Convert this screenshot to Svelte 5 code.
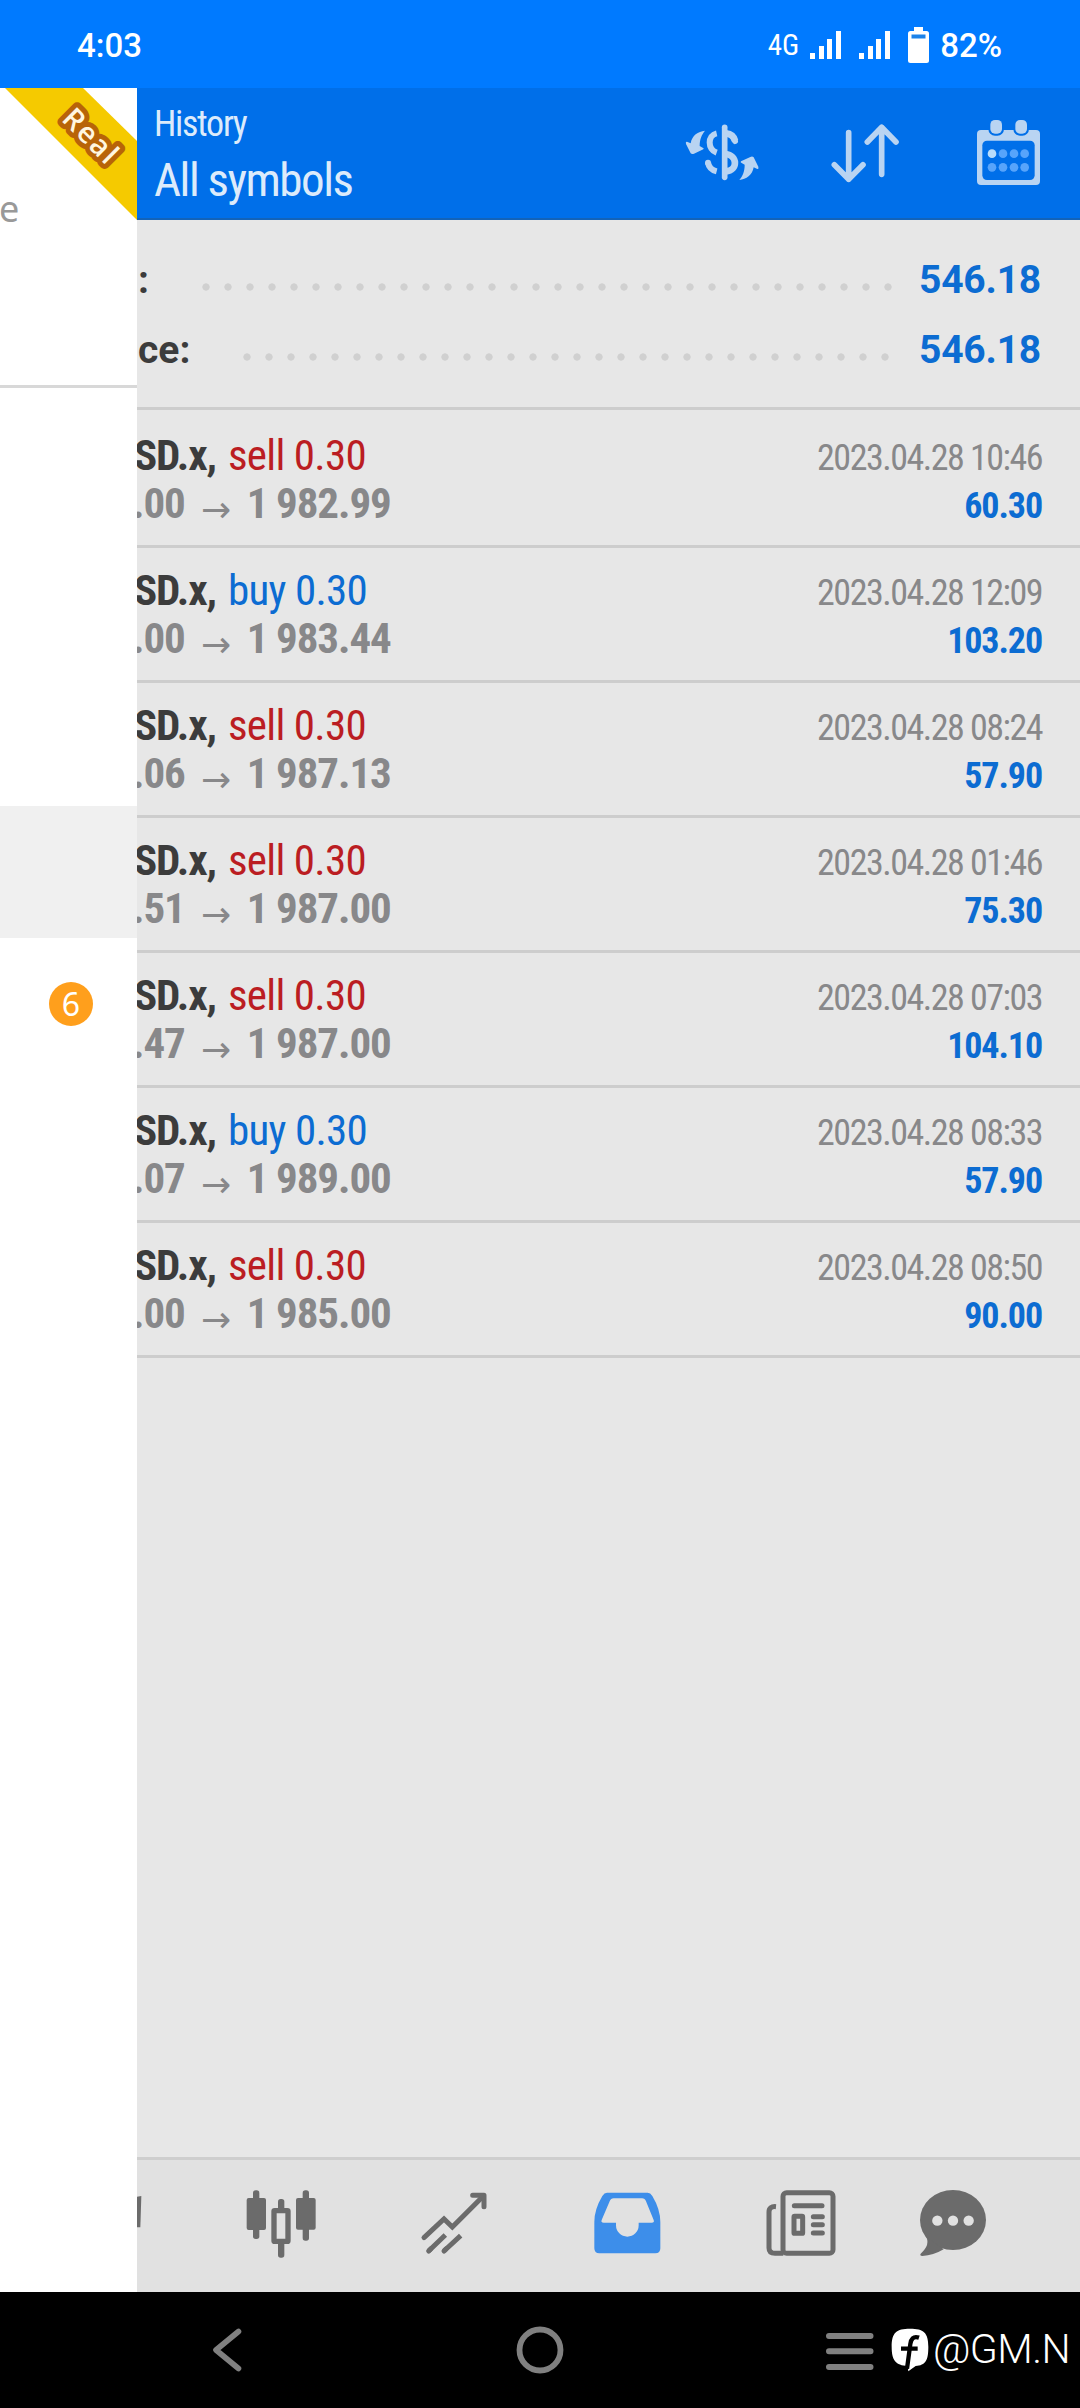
<script lang="ts">
	interface Deal {
		type: 'sell' | 'buy';
		open: string;
		close: string;
		time: string;
		profit: string;
	}

	const totals = [
		{ label: ':', value: '546.18', dots: 32 },
		{ label: 'ce:', value: '546.18', dots: 30 }
	];

	const deals: Deal[] = [
		{ type: 'sell', open: '.00', close: '1 982.99', time: '2023.04.28 10:46', profit: '60.30' },
		{ type: 'buy', open: '.00', close: '1 983.44', time: '2023.04.28 12:09', profit: '103.20' },
		{ type: 'sell', open: '.06', close: '1 987.13', time: '2023.04.28 08:24', profit: '57.90' },
		{ type: 'sell', open: '.51', close: '1 987.00', time: '2023.04.28 01:46', profit: '75.30' },
		{ type: 'sell', open: '.47', close: '1 987.00', time: '2023.04.28 07:03', profit: '104.10' },
		{ type: 'buy', open: '.07', close: '1 989.00', time: '2023.04.28 08:33', profit: '57.90' },
		{ type: 'sell', open: '.00', close: '1 985.00', time: '2023.04.28 08:50', profit: '90.00' }
	];
</script>

<div class="screen">
	<div class="status-bar">
		<span class="clock">4:03</span>
		<div class="status-right">
			<span class="network">4G</span>
			{#each [0, 1] as sim}
				<svg class="signal" class:second={sim === 1} width="31" height="28" viewBox="0 0 31 28" fill="#fff">
					<rect x="0" y="22" width="5" height="6" />
					<rect x="9" y="15" width="5" height="13" />
					<rect x="17" y="8" width="5" height="20" />
					<rect x="26" y="0" width="5" height="28" />
				</svg>
			{/each}
			<svg class="battery" width="21" height="36" viewBox="0 0 21 36">
				<rect x="6" y="0" width="9" height="6" fill="#fff" />
				<rect x="0" y="4" width="21" height="32" rx="2.5" fill="#fff" />
				<rect x="3.5" y="7.5" width="14" height="4" fill="#1c83ea" />
			</svg>
			<span class="percent">82%</span>
		</div>
	</div>

	<div class="body">
		<aside class="drawer">
			<div class="account">
				<svg class="ribbon" width="137" height="132" viewBox="0 0 137 132">
					<path d="M5 0H83L137 53V132Z" fill="#f5ca00" />
					<text x="0" y="0" transform="translate(60.5 32) rotate(45)">Real</text>
				</svg>
				<span class="account-text">e</span>
			</div>
			<div class="menu">
				<div class="menu-item selected"></div>
				<div class="menu-item">
					<span class="badge">6</span>
				</div>
			</div>
		</aside>

		<main>
			<header>
				<div class="titles">
					<div class="title"><span>History</span></div>
					<div class="subtitle"><span>All symbols</span></div>
				</div>
				<div class="actions">
					<!-- symbol filter -->
					<svg width="80" height="80" viewBox="0 0 240 240" fill="none" stroke="#b9d4f2" stroke-width="18">
						<path d="M128 46V196" stroke-width="17" stroke-linecap="round" />
						<path d="M104 64C76 70 76 112 104 122" />
						<path d="M78 151C80 165 88 174 104 178" />
						<path d="M78 152V153" stroke-linecap="round" />
						<path d="M132 64C148 66 156 74 159 86" stroke-width="20" />
						<path d="M158 85L159 87" stroke-linecap="round" />
						<path d="M130 126C168 130 168 176 132 178" stroke-width="20" />
						<g fill="#b9d4f2" stroke="none">
							<path id="arrow" d="M69 56C48 58 30 70 26 94L15 89Q10 88 12 96L26 124Q30 128 36 125L64 112Q67 108 62 107L53 102C53 82 59 68 69 56Z" />
							<use href="#arrow" transform="rotate(180 120.5 130)" />
						</g>
					</svg>
					<!-- sort order -->
					<svg width="80" height="80" viewBox="0 0 240 240" fill="none" stroke="#b9d4f2" stroke-width="17" stroke-linecap="round" stroke-linejoin="round">
						<path d="M71 62V202M28 158L71 202L114 158" />
						<path d="M170 187V46M127 90L170 46L213 90" />
					</svg>
					<!-- period -->
					<svg width="80" height="80" viewBox="0 0 240 240">
						<rect x="27" y="54" width="189" height="165" rx="12" fill="#b9d4f2" />
						<rect x="43" y="86" width="157" height="118" rx="14" fill="#006fe9" />
						{#each [67, 142] as x}
							<rect {x} y="24" width="35" height="41" rx="14" fill="#b9d4f2" stroke="#006fe9" stroke-width="12" paint-order="stroke" />
						{/each}
						{#each [125, 166] as cy}
							{#each [72, 105, 138, 170] as cx}
								<circle {cx} {cy} r="13" fill={cx === 72 && cy === 125 ? '#b8dcfb' : '#57a4fb'} />
							{/each}
						{/each}
					</svg>
				</div>
			</header>

			<section class="totals">
				{#each totals as total}
					<div class="total">
						<span class="label">{total.label}</span>
						<span class="dots" style="width: {total.dots * 22}px"></span>
						<span class="value">{total.value}</span>
					</div>
				{/each}
			</section>

			<section class="deals">
				{#each deals as deal}
					<div class="deal">
						<div class="left">
							<div class="line symbol"><b>SD.x,</b><span class={deal.type}>{deal.type} 0.30</span></div>
							<div class="line prices"><b class="open">{deal.open}</b><i>→</i><b class="close">{deal.close}</b></div>
						</div>
						<div class="right">
							<div class="line time"><span>{deal.time}</span></div>
							<div class="line profit"><span>{deal.profit}</span></div>
						</div>
					</div>
				{/each}
			</section>

			<nav>
				<div class="tab clipped">
					<svg width="5" height="80" viewBox="0 0 15 240">
						<path d="M0 32L13 30L10 124H0Z" fill="#6b6b6b" />
					</svg>
				</div>
				<div class="tab">
					<svg width="80" height="80" viewBox="0 0 240 240" fill="#6b6b6b">
						<rect x="36" y="13" width="19" height="146" rx="8" />
						<rect x="17" y="36" width="58" height="96" rx="6" />
						<rect x="111" y="39" width="19" height="40" rx="8" />
						<rect x="111" y="165" width="19" height="50" rx="8" />
						<rect x="99" y="74" width="42" height="92" rx="2" fill="#e1e1e1" stroke="#6b6b6b" stroke-width="16" />
						<rect x="185" y="13" width="19" height="151" rx="8" />
						<rect x="165" y="36" width="59" height="95" rx="6" />
					</svg>
				</div>
				<div class="tab">
					<svg width="80" height="80" viewBox="0 0 240 240" fill="none" stroke="#6b6b6b" stroke-width="15">
						<path d="M30 155L90 99L115 123L208 30" stroke-linecap="round" />
						<path d="M176 28H210V62" stroke-linecap="round" stroke-linejoin="round" />
						<path d="M44 195L94 147M90 195L140 149" />
						<path d="M44 195L50 189M90 195L96 189" stroke-linecap="round" />
					</svg>
				</div>
				<div class="tab">
					<svg width="80" height="80" viewBox="0 0 240 240" fill="#3d8eea">
						<path
							fill-rule="evenodd"
							d="M67 20H182Q190 20 196 30Q220 70 220 108V187Q220 202 205 202H37Q22 202 22 187V108Q22 70 46 30Q52 20 60 20ZM80 37Q71 37 68 46L44 102Q41 110 50 110H87V118A34 34 0 0 0 155 118V110H194Q203 110 200 102L177 46Q174 37 165 37Z"
						/>
					</svg>
				</div>
				<div class="tab">
					<svg width="80" height="80" viewBox="0 0 240 240" fill="none" stroke="#6b6b6b" stroke-width="15" stroke-linecap="round">
						<rect x="69" y="20" width="150" height="182" rx="11" />
						<path d="M48 62Q27 60 27 78V186Q27 202 45 202H70" stroke-linecap="butt" />
						<path d="M103 59H186" />
						<rect x="102" y="91" width="26" height="51" rx="2" />
						<path d="M160 92H187M160 116H187M160 141H187" />
					</svg>
				</div>
				<div class="tab last">
					<svg width="80" height="80" viewBox="0 0 240 240" fill="#6b6b6b">
						<ellipse cx="120" cy="102" rx="99" ry="90" />
						<path d="M38 150Q54 175 23 203Q19 209 28 210Q62 208 92 190Z" />
						<g fill="#e1e1e1">
							<circle cx="73" cy="104" r="15.5" />
							<circle cx="120" cy="104" r="15.5" />
							<circle cx="167" cy="104" r="15.5" />
						</g>
					</svg>
				</div>
			</nav>
		</main>
	</div>

	<div class="system-nav">
		<svg class="back" width="34" height="50" viewBox="0 0 34 50" fill="none" stroke="#808080" stroke-width="5.6" stroke-linecap="round" stroke-linejoin="round">
			<path d="M28.5 6.5L6 25L28.5 43.5" />
		</svg>
		<svg class="home" width="50" height="50" viewBox="0 0 50 50" fill="none" stroke="#808080" stroke-width="5.8">
			<circle cx="25" cy="25" r="20.5" />
		</svg>
		<svg class="recent" width="50" height="50" viewBox="0 0 50 50" fill="none" stroke="#808080" stroke-width="6" stroke-linecap="round">
			<path d="M4 11H45.5M4 26.3H45.5M4 42H45.5" />
		</svg>
		<div class="watermark">
			<svg width="38" height="44" viewBox="0 0 114 132">
				<path d="M57 2C98 2 112 14 112 56C112 98 104 111 74 114L52 130L50 114C14 111 2 98 2 56C2 14 16 2 57 2Z" fill="#fff" />
				<path d="M84 29C66 23 60 34 58 48L48 122M30 62H80" fill="none" stroke="#000" stroke-width="13" />
			</svg>
			<span>@GM.N</span>
		</div>
	</div>
</div>

<style>
	:global(body) {
		margin: 0;
		background: #000;
	}

	.screen {
		width: 1080px;
		height: 2408px;
		display: flex;
		flex-direction: column;
		overflow: hidden;
		font-family: 'Roboto Condensed', Roboto, 'Noto Sans', sans-serif;
		font-stretch: 75%;
		white-space: nowrap;
	}

	svg {
		display: block;
		flex: none;
	}

	/* status bar */
	.status-bar {
		height: 88px;
		flex: none;
		display: flex;
		align-items: center;
		justify-content: space-between;
		padding: 2px 78px 0 77px;
		box-sizing: border-box;
		background: #007aff;
		color: #fff;
		font-family: Roboto, sans-serif;
		font-stretch: 100%;
		font-size: 33px;
		font-weight: 500;
	}
	.status-right {
		display: flex;
		align-items: center;
	}
	.network {
		font-size: 29px;
		font-stretch: 75%;
		font-weight: 400;
		margin-right: 11px;
	}
	.signal.second {
		margin-left: 18px;
	}
	.battery {
		margin: 0 11px 0 18px;
	}

	.body {
		flex: 1;
		display: flex;
		min-height: 0;
	}

	/* side menu */
	.drawer {
		width: 137px;
		flex: none;
		background: #fff;
		font-family: 'Noto Sans', sans-serif;
		font-stretch: 100%;
	}
	.account {
		height: 300px;
		box-sizing: border-box;
		border-bottom: 3px solid #d8d8d8;
		overflow: hidden;
	}
	.ribbon text {
		font: 600 29px 'Open Sans', 'Noto Sans', sans-serif;
		letter-spacing: 1.5px;
		fill: #fff6e0;
		stroke: #b86408;
		stroke-width: 10px;
		stroke-linejoin: round;
		paint-order: stroke;
	}
	.account-text {
		display: block;
		margin-top: -38px;
		font-size: 36px;
		line-height: 54px;
		color: #999;
		margin-left: -1px;
	}
	.menu {
		padding-top: 418px;
	}
	.menu-item {
		height: 132px;
		display: flex;
		align-items: center;
		justify-content: flex-end;
		padding-right: 44px;
	}
	.menu-item.selected {
		background: #f0f0f0;
	}
	.badge {
		width: 44px;
		height: 44px;
		border-radius: 50%;
		background: #ff9f1c;
		color: #fff;
		font-size: 32px;
		line-height: 44px;
		text-align: center;
	}

	/* history page */
	main {
		flex: 1;
		min-width: 0;
		display: flex;
		flex-direction: column;
		overflow: hidden;
		background: #e7e7e7;
	}
	header {
		height: 132px;
		flex: none;
		box-sizing: border-box;
		display: flex;
		justify-content: space-between;
		padding: 0 32px 0 17px;
		background: #006fe9;
		border-bottom: 2px solid #1363b8;
		color: #dcebfb;
	}
	.title {
		margin-top: 15px;
		font-size: 36px;
		line-height: 42px;
		letter-spacing: -1.3px;
	}
	.subtitle {
		margin-top: 6px;
		font-size: 47px;
		line-height: 58px;
		letter-spacing: -1.5px;
	}
	.actions {
		display: flex;
		gap: 63px;
		margin-top: 24px;
	}

	.totals {
		height: 190px;
		flex: none;
		box-sizing: border-box;
		padding-top: 25px;
		border-bottom: 3px solid #cdcdcd;
		font-family: Roboto, sans-serif;
		font-stretch: 100%;
	}
	.total {
		height: 70px;
		display: flex;
		align-items: center;
		padding: 0 39px 0 1px;
		font-size: 39px;
		font-weight: 700;
		color: #3c3c3c;
	}
	.dots {
		height: 8px;
		margin: 14px 23px 0 auto;
		background: radial-gradient(circle at 11px 4px, #d0d0d0 3.3px, transparent 4px) 0 0 / 22px 8px;
	}
	.total:first-child .dots {
		margin-right: 20px;
	}
	.value {
		color: #0c6cd2;
		letter-spacing: -0.2px;
	}

	.deals {
		flex: 1;
		padding-top: 3px;
	}
	.deal {
		height: 135px;
		box-sizing: border-box;
		display: flex;
		justify-content: space-between;
		padding: 14px 38px 0 0;
		border-bottom: 3px solid #cdcdcd;
	}
	.line {
		height: 48px;
		line-height: 56px;
		font-size: 43px;
		display: flex;
	}
	.symbol {
		color: #3c3c3c;
		margin-left: -3px;
		letter-spacing: -1.1px;
	}
	.symbol span {
		margin-left: 12px;
		letter-spacing: -0.7px;
	}
	.symbol .sell {
		color: #bb1d22;
	}
	.symbol .buy {
		color: #0c6cd2;
	}
	.prices {
		color: #88888a;
		margin-left: -5px;
		letter-spacing: -1.1px;
	}
	.prices i {
		width: 62px;
		text-align: center;
		font: 36px/70px 'DejaVu Sans', sans-serif;
	}
	.right .line {
		justify-content: flex-end;
		font-size: 36px;
		line-height: 62px;
	}
	.right .time {
		color: #88888a;
		letter-spacing: -1.5px;
	}
	.right .profit {
		color: #0c6cd2;
		font-weight: 700;
		letter-spacing: -1.1px;
	}

	nav {
		height: 135px;
		flex: none;
		box-sizing: border-box;
		display: flex;
		border-top: 3px solid #cecece;
		background: #e1e1e1;
	}
	.tab {
		width: 173px;
		display: flex;
		align-items: center;
		justify-content: center;
	}
	.tab.clipped {
		width: 57px;
		justify-content: flex-start;
	}
	.tab.last {
		width: 133px;
	}

	/* system buttons */
	.system-nav {
		height: 116px;
		flex: none;
		display: flex;
		align-items: center;
		background: #000;
	}
	.back {
		margin-left: 210px;
	}
	.home {
		margin-left: 271px;
	}
	.recent {
		margin-left: 260px;
	}
	.watermark {
		display: flex;
		align-items: center;
		margin-left: 16px;
		color: #fff;
		font: 300 41px Roboto, sans-serif;
	}
	.watermark span {
		margin: -3px 0 0 4px;
		letter-spacing: -0.6px;
	}
</style>
